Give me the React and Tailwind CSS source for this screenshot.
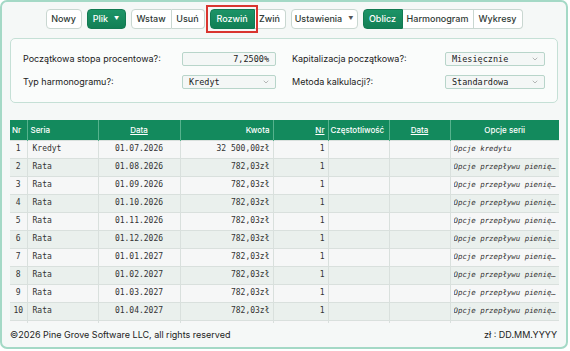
import React from 'react';
import { ChevronDown } from 'lucide-react';

const sans = { fontFamily: 'Inter, "Liberation Sans", sans-serif' };

const rows = [
  ['1', 'Kredyt', '01.07.2026', '32 500,00zł', '1', 'Opcje kredytu'],
  ['2', 'Rata', '01.08.2026', '782,03zł', '1', 'Opcje przepływu pieniężnego'],
  ['3', 'Rata', '01.09.2026', '782,03zł', '1', 'Opcje przepływu pieniężnego'],
  ['4', 'Rata', '01.10.2026', '782,03zł', '1', 'Opcje przepływu pieniężnego'],
  ['5', 'Rata', '01.11.2026', '782,03zł', '1', 'Opcje przepływu pieniężnego'],
  ['6', 'Rata', '01.12.2026', '782,03zł', '1', 'Opcje przepływu pieniężnego'],
  ['7', 'Rata', '01.01.2027', '782,03zł', '1', 'Opcje przepływu pieniężnego'],
  ['8', 'Rata', '01.02.2027', '782,03zł', '1', 'Opcje przepływu pieniężnego'],
  ['9', 'Rata', '01.03.2027', '782,03zł', '1', 'Opcje przepływu pieniężnego'],
  ['10', 'Rata', '01.04.2027', '782,03zł', '1', 'Opcje przepływu pieniężnego'],
  ['', '', '', '', '', ''],
];

function Btn({ children, green, caret, className = '' }) {
  return (
    <button
      className={
        'h-full px-[8px] flex items-center gap-[6px] text-[9px] font-medium border ' +
        (green
          ? 'bg-gradient-to-b from-[#1c9467] to-[#127f55] text-white border-[#127a52] '
          : 'bg-white text-[#2f3a36] border-[#c9d7d1] ') +
        className
      }
    >
      {children}
      {caret && <span className={'text-[5px] ' + (green ? 'text-white' : 'text-[#555]')}>▼</span>}
    </button>
  );
}

function Select({ value, w }) {
  return (
    <div className={`h-[14px] ${w} border border-[#b8d5ca] bg-[#f4f7f6] rounded-[2px] flex items-center justify-between pl-[6px] pr-[5px]`}>
      <span className="font-['DejaVu_Sans_Mono',monospace] text-[8.5px] text-[#222]">{value}</span>
      <ChevronDown size={8} strokeWidth={1.5} className="text-[#777]" />
    </div>
  );
}

function Cell({ children, className = '' }) {
  return <div className={'h-[17px] flex items-center ' + className}>{children}</div>;
}

export default function App() {
  return (
    <div className="w-[570px] h-[351px] bg-white" style={sans}>
      <div className="w-[568px] h-[349px] border-2 border-[#a4d9c6] rounded-[7px] bg-[#f5f8f7] flex flex-col px-[8px] pt-[7px]">
        {/* toolbar */}
        <div className="flex justify-center gap-[5px] h-[20px] shrink-0">
          <Btn className="rounded-[4px] w-[36px] justify-center">Nowy</Btn>
          <Btn green caret className="rounded-[4px] w-[39px] justify-center">Plik</Btn>
          <div className="flex h-full">
            <Btn className="rounded-l-[4px] w-[41px] justify-center">Wstaw</Btn>
            <Btn className="rounded-r-[4px] border-l-0 w-[33px] justify-center">Usuń</Btn>
          </div>
          <div className="flex h-full">
            <div className="relative h-full">
              <Btn green className="rounded-l-[4px] w-[45px] justify-center">Rozwiń</Btn>
              <span className="absolute -left-[4px] -top-[4px] -right-[3px] -bottom-[4px] border-2 border-[#d9352f] pointer-events-none" />
            </div>
            <Btn className="rounded-r-[4px] border-l-0 w-[31px] justify-center">Zwiń</Btn>
          </div>
          <Btn caret className="rounded-[4px] w-[67px] justify-center">Ustawienia</Btn>
          <div className="flex h-full">
            <Btn green className="rounded-l-[4px] w-[40px] justify-center">Oblicz</Btn>
            <Btn className="border-l-0 w-[71px] justify-center">Harmonogram</Btn>
            <Btn className="rounded-r-[4px] border-l-0 w-[49px] justify-center">Wykresy</Btn>
          </div>
        </div>

        {/* form panel */}
        <div className="mt-[9px] h-[65px] shrink-0 border border-[#c5e0d6] rounded-[5px] bg-[#fafcfb] px-[12px] pt-[13px] grid grid-cols-2 gap-x-[16px] gap-y-[9px] content-start text-[9px] text-[#222]">
          <div className="flex items-center justify-between h-[14px]">
            <span>Początkowa stopa procentowa?:</span>
            <div className="h-[14px] w-[94px] border border-[#b8d5ca] bg-[#f4f7f6] rounded-[2px] flex items-center justify-end pr-[6px] font-['DejaVu_Sans_Mono',monospace] text-[8.5px]">7,2500%</div>
          </div>
          <div className="flex items-center justify-between h-[14px]">
            <span>Kapitalizacja początkowa?:</span>
            <Select value="Miesięcznie" w="w-[100px]" />
          </div>
          <div className="flex items-center justify-between h-[14px]">
            <span>Typ harmonogramu?:</span>
            <Select value="Kredyt" w="w-[94px]" />
          </div>
          <div className="flex items-center justify-between h-[14px]">
            <span>Metoda kalkulacji?:</span>
            <Select value="Standardowa" w="w-[100px]" />
          </div>
        </div>

        {/* table */}
        <div className="mt-[17px] h-[203px] shrink-0 overflow-hidden w-[549px]">
          <table className="w-[549px] table-fixed border-collapse">
            <colgroup>
              <col className="w-[17px]" />
              <col className="w-[71px]" />
              <col className="w-[82px]" />
              <col className="w-[93px]" />
              <col className="w-[55px]" />
              <col className="w-[61px]" />
              <col className="w-[61px]" />
              <col className="w-[109px]" />
            </colgroup>
            <thead>
              <tr className="h-[20px] bg-[#138a5d] text-white text-[8px] font-medium">
                <th className="px-[2px] text-left font-medium border-r border-[#56b28d]">Nr</th>
                <th className="px-[3px] text-left font-medium border-r border-[#56b28d]">Seria</th>
                <th className="text-center font-medium underline border-r border-[#56b28d]">Data</th>
                <th className="pr-[3px] text-right font-medium border-r border-[#56b28d]">Kwota</th>
                <th className="pr-[3px] text-right font-medium underline border-r border-[#56b28d]">Nr</th>
                <th className="px-[2px] text-left font-medium border-r border-[#56b28d]">Częstotliwość</th>
                <th className="text-center font-medium underline border-r border-[#56b28d]">Data</th>
                <th className="text-center font-medium">Opcje serii</th>
              </tr>
            </thead>
            <tbody className="font-['DejaVu_Sans_Mono',monospace] text-[8px] text-[#333]">
              {rows.map((r, i) => (
                <tr key={i} className={i % 2 === 0 ? 'bg-[#f6f7f7]' : 'bg-[#eaf0ed]'}>
                  <td className="p-0 border border-[#d9e0dd] border-l-0"><Cell className="justify-center">{r[0]}</Cell></td>
                  <td className="p-0 border border-[#d9e0dd]"><Cell className="pl-[5px]">{r[1]}</Cell></td>
                  <td className="p-0 border border-[#d9e0dd]"><Cell className="justify-center">{r[2]}</Cell></td>
                  <td className="p-0 border border-[#d9e0dd]"><Cell className="justify-end pr-[3px]">{r[3]}</Cell></td>
                  <td className="p-0 border border-[#d9e0dd]"><Cell className="justify-end pr-[3px]">{r[4]}</Cell></td>
                  <td className="p-0 border border-[#d9e0dd]"><Cell /></td>
                  <td className="p-0 border border-[#d9e0dd]"><Cell /></td>
                  <td className="p-0 border border-[#d9e0dd] border-r-0">
                    <Cell className="pl-[3px]">
                      <span className="w-[104px] truncate italic text-[7.4px]">{r[5]}</span>
                    </Cell>
                  </td>
                </tr>
              ))}
            </tbody>
          </table>
        </div>

        {/* footer */}
        <div className="flex-1 flex items-center justify-between text-[9px] text-[#222] pr-[1px]">
          <span>©2026 Pine Grove Software LLC, all rights reserved</span>
          <span>zł : DD.MM.YYYY</span>
        </div>
      </div>
    </div>
  );
}
